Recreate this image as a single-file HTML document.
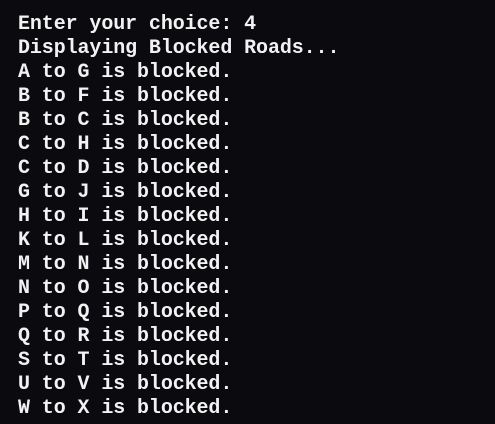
<!DOCTYPE html>
<html><head><style>
html,body{margin:0;padding:0;background:#0a0a0f;width:495px;height:424px;overflow:hidden}
pre{margin:0;position:absolute;left:18px;top:13px;font-family:"Liberation Mono",monospace;font-size:20px;line-height:24px;color:#f2f2f2;font-weight:bold;letter-spacing:-0.1px}
</style></head><body>
<pre>Enter your choice: 4
Displaying Blocked Roads...
A to G is blocked.
B to F is blocked.
B to C is blocked.
C to H is blocked.
C to D is blocked.
G to J is blocked.
H to I is blocked.
K to L is blocked.
M to N is blocked.
N to O is blocked.
P to Q is blocked.
Q to R is blocked.
S to T is blocked.
U to V is blocked.
W to X is blocked.</pre>
</body></html>
